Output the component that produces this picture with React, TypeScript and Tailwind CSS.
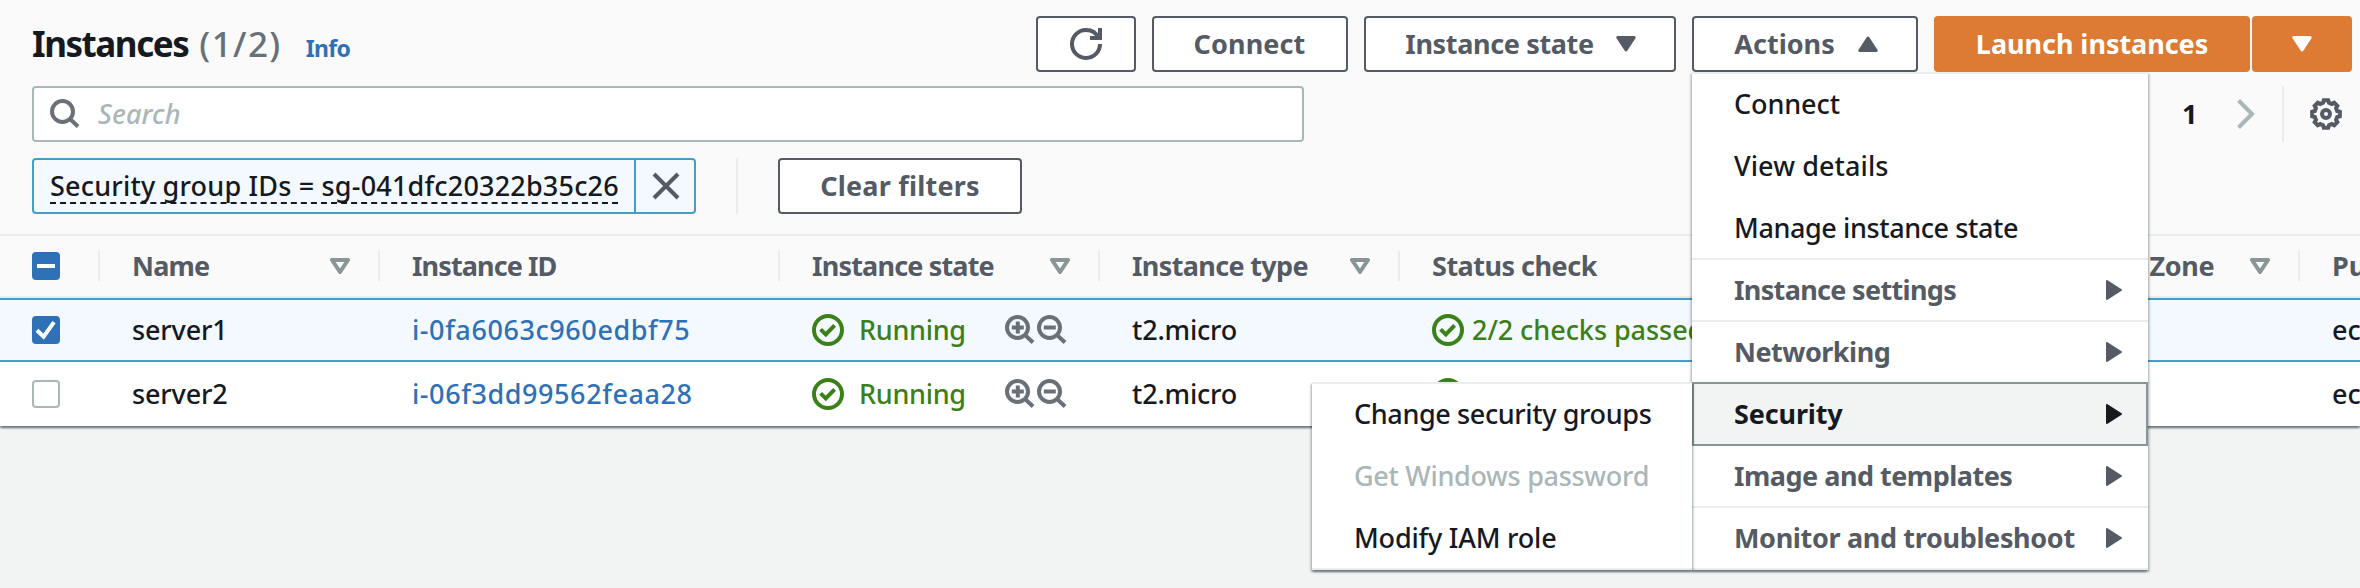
import type { ReactNode } from "react";
import clsx from "clsx";

const gearPoints = Array.from({ length: 8 }, (_, k) =>
  [
    [-15, 11.6],
    [-9, 14],
    [9, 14],
    [15, 11.6],
  ].map(([offset, r]) => {
    const a = ((k * 45 + offset) * Math.PI) / 180;
    return `${(16 + r * Math.sin(a)).toFixed(2)},${(16 - r * Math.cos(a)).toFixed(2)}`;
  }),
)
  .flat()
  .join(" ");

function GearIcon() {
  return (
    <svg className="h-8 w-8" viewBox="0 0 32 32" fill="none" stroke="#545b64" strokeWidth="4">
      <polygon points={gearPoints} />
      <circle cx="16" cy="16" r="4" />
    </svg>
  );
}

function RefreshIcon() {
  return (
    <svg className="h-8 w-8" viewBox="0 0 16 16" fill="none" stroke="#545b64" strokeWidth="2">
      <path d="M10 5h5V0" />
      <path d="M15 8a6.957 6.957 0 0 1-7 7 6.957 6.957 0 0 1-7-7 6.957 6.957 0 0 1 7-7 6.87 6.87 0 0 1 6.3 4" />
    </svg>
  );
}

function Lens({ sign }: { sign?: "plus" | "minus" }) {
  return (
    <svg className="h-[30px] w-[30px] shrink-0" viewBox="0 0 30 30" fill="none" stroke="#687078" strokeWidth="4">
      <circle cx="12.5" cy="12.5" r="10.5" />
      <path d="M19.5 19.5l8.5 8" />
      {sign && <path d="M6.8 12.5h12" />}
      {sign === "plus" && <path d="M12.8 6.5v12" />}
    </svg>
  );
}

function StatusIcon() {
  return (
    <svg className="h-8 w-8 shrink-0" viewBox="0 0 32 32" fill="none" stroke="#3b8019" strokeWidth="4">
      <circle cx="16" cy="16" r="14" />
      <path d="M8.6 15.4l5.2 5L22.6 11.4" />
    </svg>
  );
}

function Caret({ up = false }: { up?: boolean }) {
  return (
    <svg
      className={clsx("h-4 w-5 shrink-0", up && "rotate-180")}
      viewBox="0 0 20 16"
      fill="currentColor"
      stroke="currentColor"
      strokeWidth="3"
      strokeLinejoin="round"
    >
      <path d="M1.8 1.5h16.4L10 14z" />
    </svg>
  );
}

function SortIcon() {
  return (
    <svg className="h-4 w-5 shrink-0" viewBox="0 0 20 16" fill="none" stroke="#879596" strokeWidth="4" strokeLinejoin="round">
      <path d="M2 2h16l-8 12z" />
    </svg>
  );
}

function Label({ className, children }: { className?: string; children: ReactNode }) {
  return <span className={clsx("pb-0.5", className)}>{children}</span>;
}

function Button({ className, children }: { className: string; children: ReactNode }) {
  return (
    <div
      className={clsx(
        "flex h-14 items-center justify-center rounded-[4px] border-2 border-[#545b64] bg-white font-bold whitespace-nowrap text-[#545b64]",
        className,
      )}
    >
      {children}
    </div>
  );
}

function Checkbox({ state }: { state: "on" | "off" | "mixed" }) {
  if (state === "off") return <div className="h-7 w-7 rounded-[4px] border-2 border-[#aab7b8] bg-white" />;
  return (
    <svg className="h-7 w-7 rounded-[4px] bg-[#2f71b7]" viewBox="0 0 28 28" fill="none" stroke="#fff" strokeWidth="4">
      <path d={state === "on" ? "M5 14.2l6.6 6.4L22 6.2" : "M5 14h18"} />
    </svg>
  );
}

function HeaderCell({ label, sort, last, className }: { label: string; sort?: boolean; last?: boolean; className?: string }) {
  return (
    <div className={clsx("flex items-center justify-between pl-8 whitespace-nowrap", last && "overflow-hidden")}>
      <Label className={className}>{label}</Label>
      <div className="flex items-center gap-7">
        {sort && <SortIcon />}
        {!last && <div className="h-[30px] w-0.5 bg-[#eaeded]" />}
      </div>
    </div>
  );
}

const columns = "grid grid-cols-[100px_280px_400px_320px_300px_300px_260px_340px_60px]";

function Row({ name, id, selected }: { name: string; id: string; selected?: boolean }) {
  return (
    <div
      className={clsx(
        columns,
        "h-16 items-center whitespace-nowrap",
        selected ? "border-y-2 border-[#449fc8] bg-[#f3f9fe]" : "bg-white",
      )}
    >
      <div className="pl-8">
        <Checkbox state={selected ? "on" : "off"} />
      </div>
      <div className="pb-0.5 pl-8 tracking-[-0.15px]">{name}</div>
      <div className="pb-0.5 pl-8 tracking-[0.58px] text-[#2f71b7]">{id}</div>
      <div className="flex items-center pl-8">
        <StatusIcon />
        <Label className="ml-[15px] w-[146px] tracking-[-0.3px] text-[#3b8019]">Running</Label>
        <div className="flex gap-0.5">
          <Lens sign="plus" />
          <Lens sign="minus" />
        </div>
      </div>
      <div className="pb-0.5 pl-8 tracking-[-0.2px]">t2.micro</div>
      <div className="flex items-center pl-8">
        <StatusIcon />
        <Label className="ml-2 tracking-[-0.05px] text-[#3b8019]">2/2 checks passed</Label>
      </div>
      <div />
      <div />
      <div className="overflow-hidden pb-0.5 pl-8">ec2</div>
    </div>
  );
}

const panelShadow =
  "shadow-[0_2px_2px_0_rgba(0,28,36,0.4),2px_2px_2px_0_rgba(0,28,36,0.15),-2px_2px_2px_0_rgba(0,28,36,0.15)]";

function MenuItem({ label, disabled, first, className }: { label: string; disabled?: boolean; first?: boolean; className?: string }) {
  return (
    <div
      className={clsx(
        "flex h-[62px] items-center border-t-2 pl-[42px] whitespace-nowrap",
        first ? "border-[#eaeded]" : "border-transparent",
        disabled ? "text-[#aab7b8]" : "text-[#16191f]",
      )}
    >
      <Label className={className}>{label}</Label>
    </div>
  );
}

function MenuGroup({
  label,
  open,
  afterOpen,
  className,
  children,
}: {
  label: string;
  open?: boolean;
  afterOpen?: boolean;
  className?: string;
  children?: ReactNode;
}) {
  return (
    <div
      className={clsx(
        "flex items-center justify-between font-bold whitespace-nowrap",
        open
          ? "relative z-10 -mb-0.5 h-16 border-2 border-[#879596] bg-[#f2f3f3] pr-6 pl-10 text-[#16191f]"
          : "h-[62px] border-t-2 pr-[26px] pl-[42px] text-[#545b64]",
        !open && (afterOpen ? "border-transparent" : "border-[#eaeded]"),
      )}
    >
      <Label className={className}>{label}</Label>
      <svg className="h-5 w-4" viewBox="0 0 16 20" fill="currentColor" stroke="currentColor" strokeWidth="2" strokeLinejoin="round">
        <path d="M1 1v18l14-9z" />
      </svg>
      {children}
    </div>
  );
}

function SecuritySubmenu() {
  return (
    <div className={clsx("absolute -top-0.5 right-[454px] w-[380px] border-b-2 border-[#eaeded] bg-white font-[460]", panelShadow)}>
      <MenuItem label="Change security groups" first className="tracking-[-0.38px]" />
      <MenuItem label="Get Windows password" disabled className="tracking-[-0.3px]" />
      <MenuItem label="Modify IAM role" className="tracking-[-0.2px]" />
    </div>
  );
}

function ActionsMenu() {
  return (
    <div className={clsx("absolute top-14 left-0 z-20 w-[456px] border-b-2 border-[#eaeded] bg-white", panelShadow)}>
      <MenuItem label="Connect" first className="tracking-[-0.1px]" />
      <MenuItem label="View details" className="tracking-[0.1px]" />
      <MenuItem label="Manage instance state" className="tracking-[-0.4px]" />
      <MenuGroup label="Instance settings" className="tracking-[-0.67px]" />
      <MenuGroup label="Networking" className="tracking-[-0.5px]" />
      <MenuGroup label="Security" open className="tracking-[-0.15px]">
        <SecuritySubmenu />
      </MenuGroup>
      <MenuGroup label="Image and templates" afterOpen className="tracking-[-0.5px]" />
      <MenuGroup label="Monitor and troubleshoot" className="tracking-[-0.34px]" />
    </div>
  );
}

export default function App() {
  return (
    <div className="h-[588px] w-[2360px] overflow-hidden bg-[#f2f3f3] font-['Noto_Sans',sans-serif] text-[27px] leading-none font-[460] text-[#16191f]">
      <div className={panelShadow}>
        <div className="flex flex-col bg-[#fafafa] pt-4 pb-5">
          <div className="flex h-14 items-center justify-between pr-2 pl-8">
            <div className="flex items-baseline pb-0.5 whitespace-nowrap">
              <h1 className="text-[35px] font-bold tracking-[-1.45px]">Instances</h1>
              <span className="ml-[11px] text-[35px] tracking-[1.4px] text-[#687078]">(1/2)</span>
              <span className="ml-6 text-[23px] font-bold tracking-[-0.7px] text-[#2f71b7]">Info</span>
            </div>
            <div className="flex gap-4">
              <Button className="w-[100px]">
                <RefreshIcon />
              </Button>
              <Button className="w-[196px] pr-px tracking-[0.1px]">
                <Label>Connect</Label>
              </Button>
              <Button className="w-[312px] gap-[22px] pl-px">
                <Label className="tracking-[-0.35px]">Instance state</Label>
                <Caret />
              </Button>
              <div className="relative">
                <Button className="w-[226px] gap-[23px] pl-0.5">
                  <Label>Actions</Label>
                  <Caret up />
                </Button>
                <ActionsMenu />
              </div>
              <div className="flex gap-0.5 font-bold text-white">
                <div className="flex h-14 w-[316px] items-center justify-center rounded-[4px] bg-[#dd7a33] tracking-[-0.05px]">
                  <Label>Launch instances</Label>
                </div>
                <div className="flex h-14 w-[100px] items-center justify-center rounded-[4px] bg-[#dd7a33]">
                  <Caret />
                </div>
              </div>
            </div>
          </div>

          <div className="mt-3.5 flex h-14 items-center justify-between pr-[18px] pl-8">
            <div className="flex h-14 w-[1272px] items-center gap-[18px] rounded-[4px] border-2 border-[#aab7b8] bg-white pl-4 tracking-[0.1px] text-[#aab7b8] italic">
              <Lens />
              <Label>Search</Label>
            </div>
            <div className="flex items-center">
              <Label className="w-[55px] font-bold">1</Label>
              <svg className="h-[30px] w-[18px]" viewBox="0 0 18 30" fill="none" stroke="#aab7b8" strokeWidth="4">
                <path d="M1.6 1.5L15 15 1.6 28.5" />
              </svg>
              <div className="mr-[26px] ml-[27px] h-14 w-0.5 bg-[#eaeded]" />
              <GearIcon />
            </div>
          </div>

          <div className="mt-4 flex h-14 items-center pl-8">
            <div className="flex h-14 w-[664px] rounded-[4px] border-2 border-[#449fc8] bg-[#f3f9fe]">
              <div className="w-[600px] pl-4">
                <div className="h-11 w-[568px] border-b-2 border-dashed border-[#16191f] leading-[51px] tracking-[0.19px] whitespace-nowrap">
                  Security group IDs = sg-041dfc20322b35c26
                </div>
              </div>
              <div className="flex flex-1 items-center justify-center border-l-2 border-[#449fc8] pl-0.5">
                <svg className="h-7 w-7" viewBox="0 0 28 28" fill="none" stroke="#545b64" strokeWidth="4">
                  <path d="M2 2l24 24M26 2L2 26" />
                </svg>
              </div>
            </div>
            <div className="mr-10 ml-10 h-14 w-0.5 bg-[#eaeded]" />
            <Button className="w-[244px] tracking-[0.22px]">
              <Label>Clear filters</Label>
            </Button>
          </div>
        </div>

        <div className={clsx(columns, "h-16 border-y-2 border-[#eaeded] bg-[#fafafa] font-bold text-[#545b64]")}>
          <div className="flex items-center justify-between pl-8">
            <Checkbox state="mixed" />
            <div className="h-[30px] w-0.5 bg-[#eaeded]" />
          </div>
          <HeaderCell label="Name" sort className="tracking-[-0.8px]" />
          <HeaderCell label="Instance ID" className="tracking-[-0.9px]" />
          <HeaderCell label="Instance state" sort className="tracking-[-0.82px]" />
          <HeaderCell label="Instance type" sort className="tracking-[-0.65px]" />
          <HeaderCell label="Status check" className="tracking-[-0.5px]" />
          <div />
          <HeaderCell label="Availability Zone" sort className="ml-1 tracking-[-0.35px]" />
          <HeaderCell label="Public IPv4 DNS" last />
        </div>
        <Row name="server1" id="i-0fa6063c960edbf75" selected />
        <Row name="server2" id="i-06f3dd99562feaa28" />
      </div>
    </div>
  );
}
